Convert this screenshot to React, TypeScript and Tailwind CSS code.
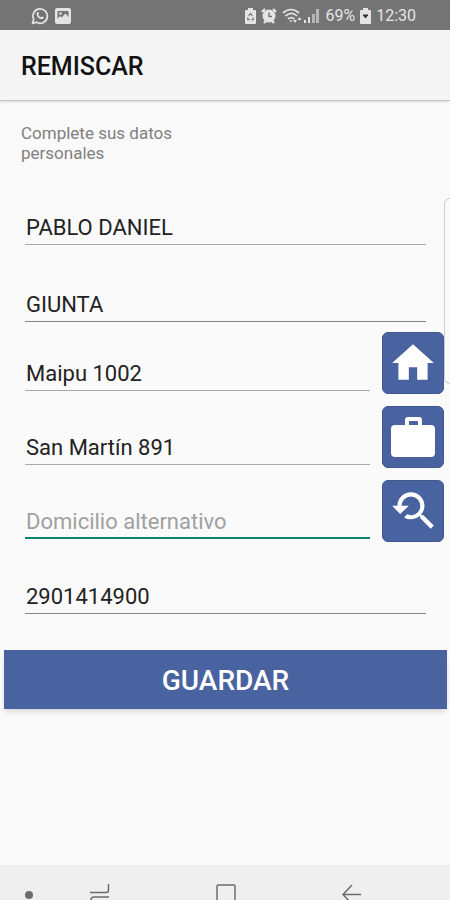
import type { ReactNode } from "react";
import { MdHome, MdYoutubeSearchedFor } from "react-icons/md";

const FIELD =
  "block h-[34px] w-full min-w-0 rounded-none border-b bg-transparent pl-px text-[22px] text-[#222] outline-none placeholder:text-[#a0a0a0]";

function StatusBar() {
  return (
    <div className="flex h-[30px] items-center justify-between bg-[#747474] pt-px pr-[34px] pl-[31px] text-[#e4e4e4]">
      <div className="flex items-center gap-[6px]">
        {/* WhatsApp */}
        <svg width="18" height="18" viewBox="0 0 18 18" fill="none" aria-hidden>
          <path
            d="M1.5 16.5l1.2-4.2A7.2 7.2 0 1 1 5.5 15.3z"
            stroke="currentColor"
            strokeWidth="1.7"
            strokeLinejoin="round"
          />
          <path
            d="M6.2 5.2c.5-.5 1.1-.4 1.3.2l.5 1.3-.7 1c.5 1.2 1.3 2 2.500 2.500l1-.8 1.5.7c.5.3.5.8 0 1.4-2.800 2.500-8.600-3.300-6.100-6.300z"
            fill="currentColor"
          />
        </svg>
        {/* Gallery */}
        <svg width="16" height="16" viewBox="0 0 16 16" aria-hidden>
          <rect width="16" height="16" rx="2" fill="currentColor" />
          <path d="M2.500 3h11v6l-3-3.500-4 4-1.500-1.500-2.500 3z" fill="#747474" />
          <circle cx="5.500" cy="5.500" r="1.300" fill="currentColor" />
        </svg>
      </div>

      <div className="flex items-center gap-[5px] text-[16px]">
        {/* Battery saver */}
        <svg width="11" height="16" viewBox="0 0 11 16" aria-hidden>
          <path d="M3 0h5v2h2a1 1 0 0 1 1 1v12a1 1 0 0 1-1 1H1a1 1 0 0 1-1-1V3a1 1 0 0 1 1-1h2z" fill="currentColor" />
          <path d="M3.500 8l2-2.500 2 2.500M2.800 9.500v2.200h2M8.200 9.500v2.200H6.500" fill="none" stroke="#747474" strokeWidth="1.200" />
        </svg>
        {/* Alarm */}
        <svg width="16" height="16" viewBox="0 0 16 16" aria-hidden>
          <path d="M1 4l3-3M15 4l-3-3M3 15l2-2M13 15l-2-2" stroke="currentColor" strokeWidth="2.400" />
          <circle cx="8" cy="8" r="6.500" fill="currentColor" />
          <path d="M8 4.500V8.500h3" fill="none" stroke="#747474" strokeWidth="1.400" />
        </svg>
        {/* Wifi */}
        <svg className="-mr-[3px]" width="20" height="16" viewBox="0 0 20 16" fill="none" aria-hidden>
          <path
            d="M1 5c5-4.500 11-4.500 16 0M3.500 8c4-3.300 8-3.300 11.500 0M6 11c2-1.800 4.500-1.800 6.500 0"
            stroke="currentColor"
            strokeWidth="1.700"
          />
          <path d="M7.500 12.500h3L9 14.500z" fill="currentColor" />
          <path d="M11 12h4l-2 3zM15.500 12h4l-2-3z" fill="currentColor" />
        </svg>
        {/* Signal */}
        <svg width="16" height="16" viewBox="0 0 16 16" fill="currentColor" aria-hidden>
          <path d="M0 12h2v3H0zM4 9h2v6H4z" />
          <path d="M8 6h3v9H8zM12 1h3v14h-3z" opacity=".6" />
        </svg>
        <span>69%</span>
        {/* Charging battery */}
        <svg width="11" height="16" viewBox="0 0 11 16" aria-hidden>
          <path d="M3 0h5v2h2a1 1 0 0 1 1 1v12a1 1 0 0 1-1 1H1a1 1 0 0 1-1-1V3a1 1 0 0 1 1-1h2z" fill="currentColor" />
          <path d="M3 6.500h5v1L5.500 10.500 3 7.500z" fill="#333" />
        </svg>
        <span>12:30</span>
      </div>
    </div>
  );
}

function AddressRow({
  label,
  value,
  placeholder,
  active,
  action,
  children,
}: {
  label: string;
  value?: string;
  placeholder?: string;
  active?: boolean;
  action: string;
  children: ReactNode;
}) {
  return (
    <div className="flex items-end gap-3">
      <div className="min-w-0 flex-1 pb-[3px]">
        <input
          type="text"
          aria-label={label}
          defaultValue={value}
          placeholder={placeholder}
          className={`${FIELD} ${active ? "border-b-2 border-[#0b8570]" : "border-[#a8a8a8]"}`}
        />
      </div>
      <button
        type="button"
        aria-label={action}
        className="flex size-[62px] shrink-0 items-center justify-center rounded-md border border-[#3f5890] bg-[#4863a0] text-white"
      >
        {children}
      </button>
    </div>
  );
}

function NavBar() {
  return (
    <nav className="flex h-[35px] items-start overflow-hidden bg-[#efefef] pt-[18px] pr-[35px] pl-[21px] text-[#6c6c6c]">
      <button type="button" aria-label="Ocultar barra" className="w-4">
        <svg className="mx-auto" width="10" height="20" viewBox="0 0 10 20" aria-hidden>
          <circle cx="5" cy="12" r="4" fill="currentColor" />
        </svg>
      </button>
      <button type="button" aria-label="Recientes" className="flex flex-1 justify-center">
        <svg width="20" height="24" viewBox="0 0 20 24" fill="none" stroke="currentColor" strokeWidth="1.500" aria-hidden>
          <path d="M18.500 1v6q0 2.500-2.500 2.500H0M19 14H4q-3 0-3 3v6" />
        </svg>
      </button>
      <button type="button" aria-label="Inicio" className="flex flex-1 justify-center">
        <svg width="20" height="24" viewBox="0 0 20 24" fill="none" stroke="currentColor" strokeWidth="1.500" aria-hidden>
          <rect x="1" y="2" width="18" height="18" rx="1" />
        </svg>
      </button>
      <button type="button" aria-label="Atrás" className="flex flex-1 justify-center">
        <svg width="20" height="24" viewBox="0 0 20 24" fill="none" stroke="currentColor" strokeWidth="1.500" aria-hidden>
          <path d="M19 11.500H1M10 2l-9 9.500 9 9.500" />
        </svg>
      </button>
    </nav>
  );
}

export default function App() {
  return (
    <div className="relative flex min-h-screen flex-col overflow-hidden bg-[#fafafa] font-[Roboto,'Liberation_Sans',sans-serif]">
      <StatusBar />

      <header className="flex h-[71px] items-center border-b border-[#c4c4c4] bg-[#f5f5f5] px-[21px] pt-[3px] shadow-sm">
        <h1 className="text-[25px] font-medium text-[#111]">REMISCAR</h1>
      </header>

      <main className="flex-1 pt-[22px]">
        <form onSubmit={(e) => e.preventDefault()}>
          <p className="ml-[21px] w-[180px] text-[17px] leading-5 text-[#808080]">
            Complete sus datos personales
          </p>

          <div className="mt-12 flex flex-col gap-[43px] pr-6 pl-[25px]">
            <input type="text" aria-label="Nombre" defaultValue="PABLO DANIEL" className={`${FIELD} border-[#a8a8a8]`} />
            <input type="text" aria-label="Apellido" defaultValue="GIUNTA" className={`${FIELD} border-[#858585]`} />
          </div>

          <div className="mt-[10px] flex flex-col gap-3 pr-[6px] pl-[25px]">
            <AddressRow label="Domicilio" value="Maipu 1002" action="Usar domicilio">
              <MdHome size={50} />
            </AddressRow>
            <AddressRow label="Trabajo" value="San Martín 891" action="Usar trabajo">
              <svg width="44" height="42" viewBox="0 0 44 42" aria-hidden>
                <path
                  fill="currentColor"
                  fillRule="evenodd"
                  d="M17 1h11q3 0 3 3v5h9q4 0 4 4v24q0 4-4 4H4q-4 0-4-4V13q0-4 4-4h10V4q0-3 3-3zM18 5v4h9V5z"
                />
              </svg>
            </AddressRow>
            <AddressRow label="Domicilio alternativo" placeholder="Domicilio alternativo" active action="Buscar domicilio">
              <MdYoutubeSearchedFor size={50} />
            </AddressRow>
          </div>

          <div className="mt-[38px] pr-6 pl-[25px]">
            <input type="tel" aria-label="Teléfono" defaultValue="2901414900" className={`${FIELD} border-[#858585]`} />
          </div>

          <div className="mt-9 pr-[3px] pl-1">
            <button type="submit" className="h-[59px] w-full bg-[#4863a0] pt-[3px] text-[28px] font-medium text-white shadow-md">
              GUARDAR
            </button>
          </div>
        </form>
      </main>

      <NavBar />

      {/* Edge panel peeking in from the right */}
      <div
        aria-hidden
        className="pointer-events-none absolute top-[198px] right-0 h-[186px] w-[6px] rounded-l-md border border-r-0 border-[#cfcfcf]"
      />
    </div>
  );
}
